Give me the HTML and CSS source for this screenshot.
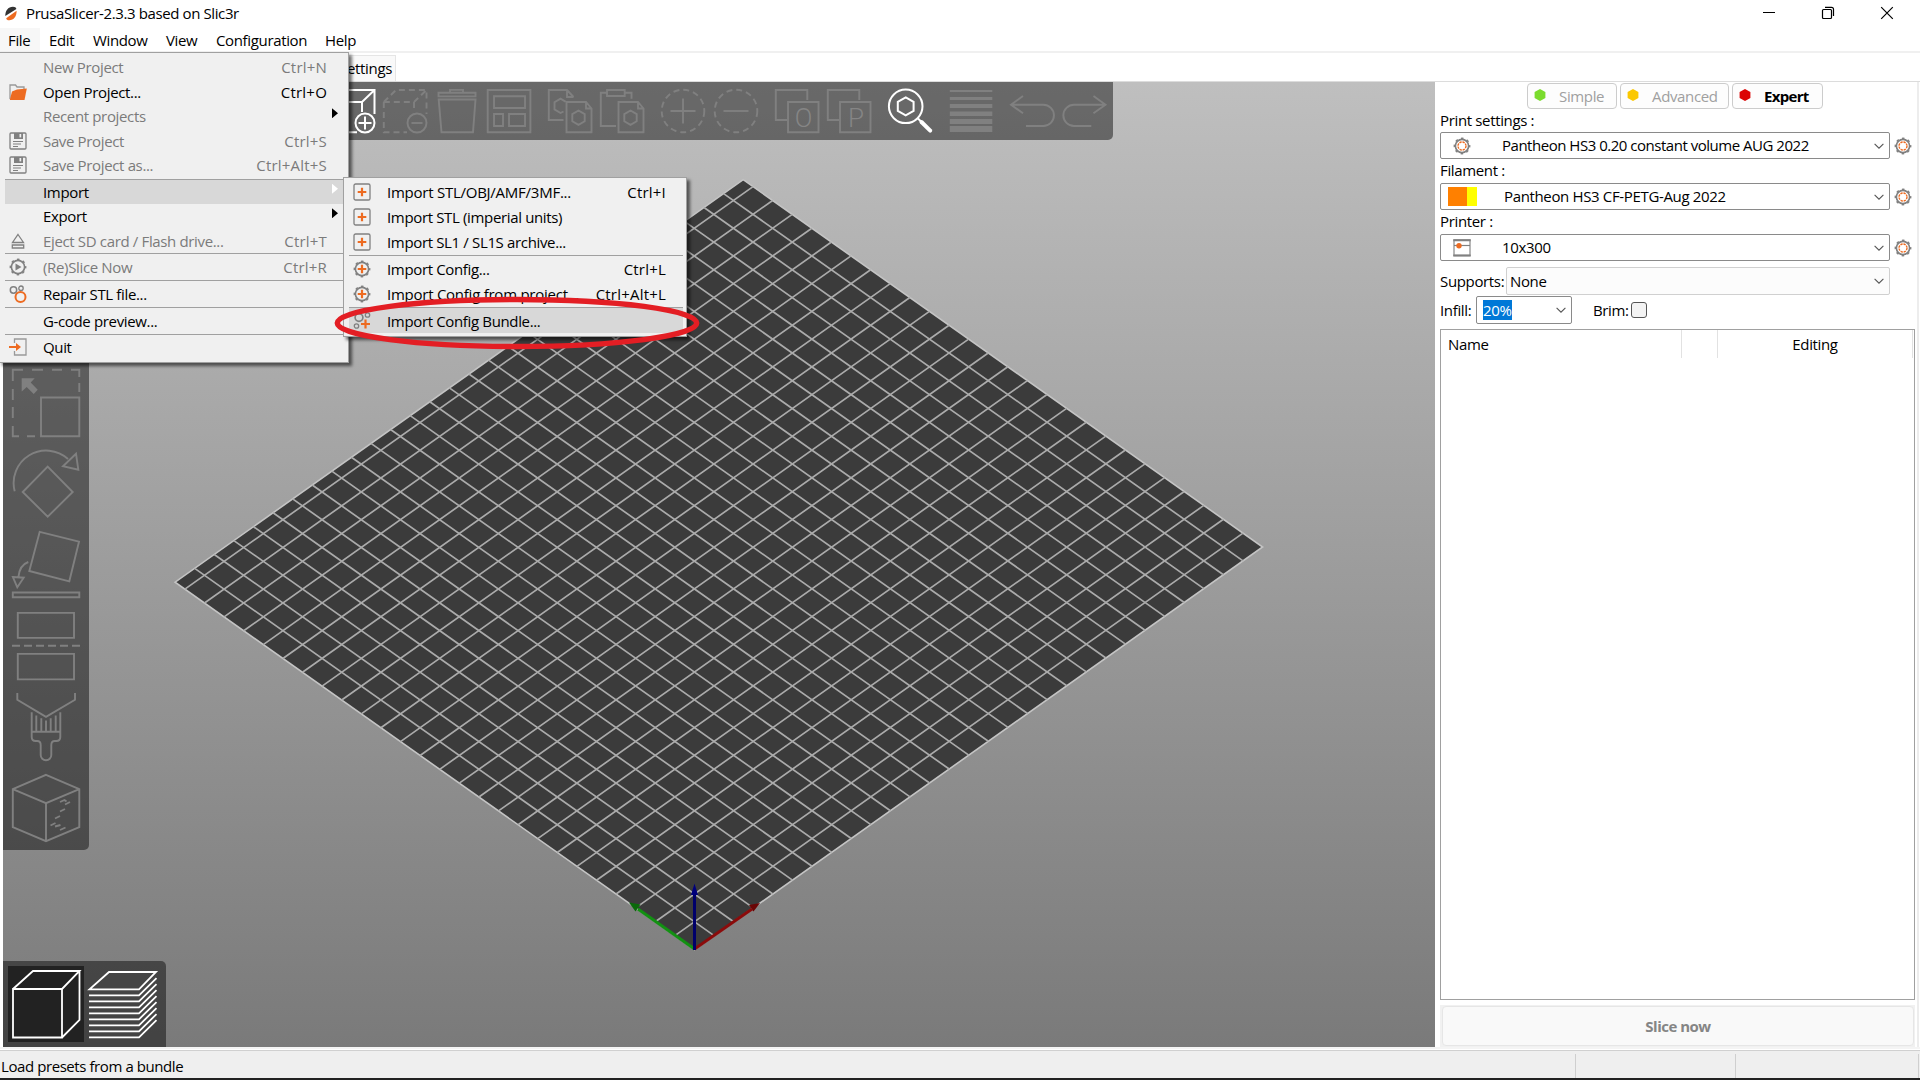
FILE: index.html
```html
<!DOCTYPE html>
<html lang="en">
<head>
<meta charset="utf-8">
<title>PrusaSlicer-2.3.3 based on Slic3r</title>
<link rel="stylesheet" href="styles.css">
</head>
<body>
<svg class="defs" aria-hidden="true">
  <symbol id="gear" viewBox="0 0 18 18">
    <circle cx="9" cy="9" r="6.6" fill="none" stroke="#808080" stroke-width="1.6"/>
    <circle cx="9" cy="9" r="7.6" fill="none" stroke="#808080" stroke-width="1.6" stroke-dasharray="2.6 3.37" stroke-dashoffset="1.3"/>
  </symbol>
  <symbol id="cog" viewBox="0 0 18 18">
    <use href="#gear"/>
    <circle cx="9" cy="9" r="4" fill="none" stroke="#ed6b21" stroke-width="1.4" stroke-dasharray="2.3 .84"/>
  </symbol>
  <symbol id="plus" viewBox="0 0 18 18"><path d="M9 4.700v8.600M4.700 9h8.600" stroke="#ed6b21" stroke-width="2.200"/></symbol>
  <symbol id="add-part" viewBox="0 0 18 18">
    <rect x="1" y="1" width="16" height="16" rx="1.6" fill="none" stroke="#808080" stroke-width="1.3"/><use href="#plus"/>
  </symbol>
  <symbol id="add-config" viewBox="0 0 18 18"><use href="#gear"/><use href="#plus"/></symbol>
  <symbol id="save" viewBox="0 0 18 18">
    <rect x="1" y="1" width="16" height="16" rx="1" fill="none" stroke="#808080" stroke-width="1.3"/>
    <path d="M5 1h9v6H5z" fill="#808080"/><path d="M10.500 2v3.400h1.700V2z" fill="#f0f0f0"/>
    <path d="M4 9.500h10M4 12h8M4 14.500h5" stroke="#808080" stroke-width="1.2"/>
  </symbol>
  <symbol id="chev" viewBox="0 0 10 6"><path d="M.6.8 5 5.200 9.400.8" fill="none" stroke="#555" stroke-width="1.1"/></symbol>
</svg>

<header class="titlebar">
  <svg class="logo" viewBox="0 0 12 14"><path d="M.3 9.500C.2 4 3 .5 8 .2c2 0 3 .8 3.400 2.200z" fill="#333"/><path d="M1.200 11.700 11.600 4.200c.2 5.500-2.800 9.300-7.400 9.600-1.800 0-2.700-.8-3-2.100z" fill="#ed6b21"/></svg>
  <span class="title">PrusaSlicer-2.3.3 based on Slic3r</span>
  <div class="winbtns">
    <svg viewBox="0 0 14 14"><path d="M1 6.500h12" stroke="#000"/></svg>
    <svg viewBox="0 0 14 14" fill="none" stroke="#000" stroke-width="1.200"><rect x="1.500" y="3.500" width="9" height="9" rx="1"/><path d="M4 1.300h6.500a2 2 0 0 1 2 2V10"/></svg>
    <svg viewBox="0 0 14 14"><path d="M1.200 1.200 12.800 12.800M12.800 1.200 1.200 12.800" stroke="#000" stroke-width="1.200"/></svg>
  </div>
</header>
<nav class="menubar">
  <span class="open m1">File</span><span class="m2">Edit</span><span class="m3">Window</span><span class="m4">View</span><span class="m5">Configuration</span><span class="m6">Help</span>
</nav>
<div class="tabs"><span class="tab">Settings</span></div>

<main class="work">
  <section class="canvas">
    <svg class="scene" viewBox="3 82 1432 965">
      <g transform="matrix(19.59 -13.88 -19.6 -13.86 694.500 949.500)">
        <path class="bed" d="M0 0H29V26.500H0z"/>
        <path class="grid" d="M1 0v26.500m1 0v-26.500m1 0v26.500m1 0v-26.500m1 0v26.500m1 0v-26.500m1 0v26.500m1 0v-26.500m1 0v26.500m1 0v-26.500m1 0v26.500m1 0v-26.500m1 0v26.500m1 0v-26.500m1 0v26.500m1 0v-26.500m1 0v26.500m1 0v-26.500m1 0v26.500m1 0v-26.500m1 0v26.500m1 0v-26.500m1 0v26.500m1 0v-26.500m1 0v26.500m1 0v-26.500m1 0v26.500m1 0v-26.500"/>
        <path class="grid" d="M0 1h29m0 1h-29m0 1h29m0 1h-29m0 1h29m0 1h-29m0 1h29m0 1h-29m0 1h29m0 1h-29m0 1h29m0 1h-29m0 1h29m0 1h-29m0 1h29m0 1h-29m0 1h29m0 1h-29m0 1h29m0 1h-29m0 1h29m0 1h-29m0 1h29m0 1h-29m0 1h29m0 1h-29"/>
      </g>
      <path d="M694.500 949 638 909" stroke="#129012" stroke-width="3"/><path d="M629 902.500 640.500 904.500 635.500 911.500z" fill="#0a6a0a"/>
      <path d="M694.500 949 752 909" stroke="#8a0b0b" stroke-width="3"/><path d="M760 903 753.500 911.500 749 905z" fill="#6a0505"/>
      <path d="M694.500 950V893" stroke="#00006a" stroke-width="3"/><path d="M694.500 883.500 698 895h-7z" fill="#00007c"/>
    </svg>

    <div class="toolbar top">
      <div class="grp">
        <svg class="on" viewBox="0 0 44 44"><path d="M.8 13v30.300H26M.8 13H31L43.500 1M.8 13 13 1h30.500v24M31 13v10"/><circle cx="34" cy="34" r="9.500"/><path d="M34 27.500v13M27.500 34h13"/></svg>
        <svg viewBox="0 0 44 44"><path class="dash" d="M.8 13v30.300H24M.8 13H31L43.500 1M.8 13 13 1h30.500v24M31 13v10"/><circle cx="34" cy="34" r="9.500"/><path d="M28.500 34h11"/></svg>
        <svg viewBox="0 0 44 44"><path d="M3.500 3.800h37v3.600h-37zM15 3.500V.9h13v2.600M3.700 10.500h36.800L38 43.300H6.500z"/></svg>
        <svg viewBox="0 0 44 44"><path d="M.7 1h42.700v42.300H.7zM7 7.300h31V19H7zM7 25h9v12H7zM22 25h16v12H22z"/></svg>
      </div>
      <div class="grp">
        <svg viewBox="0 0 44 44"><path d="M15.500 31H.8V1H19l6.500 7M19 1v7h6.500M18.500 13H38l5.500 6.500v23.800h-25zM38 13v6.500h5.500M30.500 21.500l6.200 3.600v7.200l-6.200 3.600-6.200-3.600v-7.200zM15.500 22.500l-3 1.500-6-3.600v-7.200l6-3.600 5 3"/></svg>
        <svg viewBox="0 0 44 44"><path d="M16 37H.8V3.700H7M24.500 3.700h7v6M7 1h17.700v6H7zM18.500 13H38l5.500 6.500v23.800h-25zM38 13v6.500h5.500M30.500 21.500l6.200 3.600v7.200l-6.200 3.600-6.200-3.600v-7.200z"/></svg>
      </div>
      <div class="grp">
        <svg viewBox="0 0 44 44"><circle class="dash" cx="22" cy="22" r="21.300"/><path d="M22 9.500v25M9.500 22h25"/></svg>
        <svg viewBox="0 0 44 44"><circle class="dash" cx="22" cy="22" r="21.300"/><path d="M9.500 22h25"/></svg>
      </div>
      <div class="grp">
        <svg viewBox="0 0 44 44"><path d="M12 31H.8V1h31.500v10M13 13h30.500v30.300H13z"/><text x="28.300" y="37.500">O</text></svg>
        <svg viewBox="0 0 44 44"><path d="M12 31H.8V1h31.500v10M13 13h30.500v30.300H13z"/><text x="28.800" y="37.500">P</text></svg>
      </div>
      <div class="grp"><svg class="on" viewBox="0 0 44 44"><circle cx="17.700" cy="17.300" r="16.800"/><path d="M17.700 8.300l7.900 4.500v9l-7.900 4.500-7.900-4.500v-9zM29.500 29l4 4"/><path d="M33.500 33l8.700 8.700" stroke-width="4" stroke-linecap="round"/></svg></div>
      <div class="grp"><svg class="fill" viewBox="0 0 44 44"><path d="M.8 1h42.500v2H.8zM.8 8h42.500v3H.8zM.8 15h42.500v4H.8zM.8 22.600h42.500V27H.8zM.8 30h42.500v5H.8zM.8 37h42.500v6H.8z"/></svg></div>
      <div class="grp">
        <svg viewBox="0 0 44 44"><path d="M13 7 1 15.700l12 8.600M1 15.700h32.300a10.650 10.650 0 0 1 0 21.300H16"/></svg>
        <svg viewBox="0 0 44 44"><path d="M31.500 7 43.500 15.700l-12 8.600M43.500 15.700H12a10.650 10.650 0 0 0 0 21.300h17.300"/></svg>
      </div>
    </div>

    <div class="toolbar side">
      <svg viewBox="0 0 68 68"><path d="M.8 12V.8H11M20 .8h11M40 .8h10M59 .8h8.300V8M.8 20v11M.8 38v11M.8 57v10.200H7M15 67.200h8M67.300 14v9M29 28.500h38.300v38.700H29z"/><path d="M9.700 9.300h13l-4 4.200 7 7.200-4 4.300-7-7-5 4.500z" class="solid"/></svg>
      <svg viewBox="0 0 68 68"><path d="M2.700 41.300A32.500 32.500 0 0 1 56 9M64 3.700l2.300 16L51 16.300zM35.700 16.700l25 25.300-25 24.700-25-24.700z"/></svg>
      <svg viewBox="0 0 68 68"><path d="M27.700.8 67 10.700 57.300 50.300 17.300 40zM16.300 31Q7.500 34 6.300 46.500M.9 46l10.800.7-6.400 9.600zM.8 61.500h66.500v4.700H.8z"/></svg>
      <svg viewBox="0 0 68 68"><path d="M5.800.9H62v25H5.800zM5.800 41.900H62v25.500H5.800z"/><path d="M0 33.800h68" stroke-dasharray="8 4" stroke-width="2"/></svg>
      <svg viewBox="0 0 68 68"><path d="M5.300 0v6.800l28.700 17 29-17V0M19.700 19.200V44q0 4 4 4h1.500q3.500 0 3.500 4v10a5.300 5.300 0 0 0 10.600 0V52q0-4 3.500-4h1.500q4 0 4-4V19.200M19.700 38.800h28.600M24.300 22.500v16M29.300 25.200v13.500M34 27.500v11M38.700 25.200v13.500M43.700 22.500v16"/></svg>
      <svg viewBox="0 0 68 68"><path d="M34 .8 67.300 15.200v38L34 67.200.8 53.200v-38zM.8 15.200l33.200 14 33.300-14M34 29.200v38"/><path d="M48 28l4.500-2 2 1.500M53 30.500l5-2.500M48 37.500l5-2.500M43 44.500l5-2.500M38.500 51.500l5-2.500M43 52.500l5.500-1.500M48 56l5.500-2.500"/></svg>
    </div>

    <div class="toolbar views">
      <svg class="active" viewBox="0 0 76 76"><path d="M5 23h49v48.500H5zM5 23 25 5h46.500L54 23M71.500 5v49L54 71.500"/></svg>
      <svg viewBox="0 0 76 76"><path d="M5.500 23.300H55L72 6H25zM5 29.300h50l17.500-17.200M5 35.300h50l17.500-17.200M5 41.300h50l17.500-17.200M5 47.300h50l17.500-17.200M5 53.300h50l17.500-17.200M5 59.300h50l17.500-17.200M5 65.300h50l17.500-17.200M5 71.300h50l17.500-17.200"/></svg>
    </div>
  </section>

  <aside class="panel">
    <div class="modes">
      <span class="mode simple"><svg viewBox="0 0 12 12"><path d="M6 0l5.400 3v6L6 12 .6 9V3z" fill="#7bdc2e"/></svg>Simple</span>
      <span class="mode adv"><svg viewBox="0 0 12 12"><path d="M6 0l5.400 3v6L6 12 .6 9V3z" fill="#fbc800"/></svg>Advanced</span>
      <span class="mode expert"><svg viewBox="0 0 12 12"><path d="M6 0l5.400 3v6L6 12 .6 9V3z" fill="#dc0404"/></svg>Expert</span>
    </div>
    <label>Print settings :</label>
    <div class="line"><div class="combo"><svg class="ci"><use href="#cog"/></svg><span class="s1">Pantheon HS3 0.20 constant volume AUG 2022</span><svg class="chev"><use href="#chev"/></svg></div><svg class="cog"><use href="#cog"/></svg></div>
    <label>Filament :</label>
    <div class="line"><div class="combo"><i class="swatch"></i><span class="s2">Pantheon HS3 CF-PETG-Aug 2022</span><svg class="chev"><use href="#chev"/></svg></div><svg class="cog"><use href="#cog"/></svg></div>
    <label>Printer :</label>
    <div class="line"><div class="combo"><svg class="ci" viewBox="0 0 18 18"><path d="M1 1h16v15.500H1z" fill="none" stroke="#999" stroke-width="1.400"/><path d="M.3 1.300h17.400M.3 16.500h17.400" stroke="#808080" stroke-width="2"/><path d="M1 6.500h16" stroke="#808080" stroke-width="1.200"/><circle cx="6" cy="6.800" r="2.700" fill="#ed6b21"/></svg><span>10x300</span><svg class="chev"><use href="#chev"/></svg></div><svg class="cog"><use href="#cog"/></svg></div>
    <div class="line supports"><span class="lb">Supports:</span><div class="combo light"><span>None</span><svg class="chev"><use href="#chev"/></svg></div></div>
    <div class="line infill"><span class="lb">Infill:</span><div class="combo"><span class="sel">20%</span><svg class="chev"><use href="#chev"/></svg></div><span class="brim">Brim:</span><i class="check"></i></div>
    <div class="list"><div class="head"><span class="name">Name</span><span></span><span class="edit">Editing</span></div></div>
    <div class="slice"><span>Slice now</span></div>
  </aside>
</main>

<footer class="status"><span class="msg">Load presets from a bundle</span><span class="f1"></span><span class="f2"></span></footer>

<div class="menu file">
  <div class="row off"><span>New Project</span><kbd>Ctrl+N</kbd></div>
  <div class="row"><svg viewBox="0 0 18 18"><path d="M1 16V2h5.500l1.500 2h7v3" fill="none" stroke="#999" stroke-width="1.300"/><path d="M3 8.500 8 6.500 17.800 5.500 15.500 17H.8z" fill="#ed6b21"/></svg><span>Open Project...</span><kbd>Ctrl+O</kbd></div>
  <div class="row off"><span>Recent projects</span><i class="arr"></i></div>
  <div class="row off"><svg><use href="#save"/></svg><span>Save Project</span><kbd>Ctrl+S</kbd></div>
  <div class="row off"><svg><use href="#save"/></svg><span>Save Project as...</span><kbd>Ctrl+Alt+S</kbd></div>
  <hr class="first">
  <div class="row hot"><span>Import</span><i class="arr white"></i></div>
  <div class="row"><span>Export</span><i class="arr"></i></div>
  <div class="row off"><svg viewBox="0 0 18 18"><path d="M9 2.500 14.500 10.500h-11zM3.300 13h11.400v3H3.300z" fill="none" stroke="#808080" stroke-width="1.300"/></svg><span>Eject SD card / Flash drive...</span><kbd>Ctrl+T</kbd></div>
  <hr>
  <div class="row off tall"><svg viewBox="0 0 18 18"><use href="#gear"/><path d="M6.500 5.500v7l6-3.500z" fill="#808080"/></svg><span>(Re)Slice Now</span><kbd>Ctrl+R</kbd></div>
  <hr>
  <div class="row tall"><svg viewBox="0 0 18 18" fill="none"><circle cx="4.500" cy="5" r="3.200" stroke="#808080" stroke-width="1.500"/><circle cx="12" cy="3.200" r="2.200" stroke="#808080" stroke-width="1.300"/><circle cx="11.500" cy="12" r="5" stroke="#ed6b21" stroke-width="2"/></svg><span>Repair STL file...</span></div>
  <hr>
  <div class="row short"><span>G-code preview...</span></div>
  <hr>
  <div class="row short"><svg viewBox="0 0 18 18"><path d="M5.500 5V1H17v16H5.500v-4" fill="none" stroke="#999" stroke-width="1.300"/><path d="M0 9h8" stroke="#ed6b21" stroke-width="2"/><path d="M7 5l5 4-5 4z" fill="#ed6b21"/></svg><span>Quit</span></div>
</div>

<div class="menu sub">
  <div class="row"><svg><use href="#add-part"/></svg><span class="long">Import STL/OBJ/AMF/3MF...</span><kbd>Ctrl+I</kbd></div>
  <div class="row"><svg><use href="#add-part"/></svg><span>Import STL (imperial units)</span></div>
  <div class="row"><svg><use href="#add-part"/></svg><span>Import SL1 / SL1S archive...</span></div>
  <hr class="first">
  <div class="row"><svg><use href="#add-config"/></svg><span>Import Config...</span><kbd>Ctrl+L</kbd></div>
  <div class="row"><svg><use href="#add-config"/></svg><span class="long">Import Config from project...</span><kbd>Ctrl+Alt+L</kbd></div>
  <hr class="second">
  <div class="row hot"><svg viewBox="0 0 18 18" fill="none" stroke="#808080"><circle cx="6" cy="5.500" r="3.900" stroke-width="1.700"/><circle cx="14.500" cy="3" r="2.200" stroke-width="1.300"/><circle cx="3.500" cy="14" r="2.200" stroke-width="1.300"/><path d="M12.500 7.500v9M8 12h9" stroke="#ed6b21" stroke-width="2.200"/></svg><span>Import Config Bundle...</span></div>
</div>
<svg class="marker" viewBox="0 0 366 54"><ellipse cx="183" cy="27" rx="179.700" ry="23.500"/></svg>
</body>
</html>
```
FILE: styles.css
```css
* { box-sizing: border-box; }
body {
  margin: 0; width: 1920px; height: 1080px; overflow: hidden; position: relative;
  display: flex; flex-direction: column; background: #fff; color: #000;
  font: 15px/20px "Open Sans", "Noto Sans", sans-serif; letter-spacing: -0.35px;
}
svg { display: block; flex: none; }
.defs { position: absolute; width: 0; height: 0; }
span, label, kbd { white-space: nowrap; }

.titlebar { height: 28px; flex: none; display: flex; align-items: center; padding: 0 16px 2px 5px; }
.logo { width: 12px; height: 15px; margin-right: 9px; }
.title { letter-spacing: -.39px; }
.winbtns { margin-left: auto; display: flex; gap: 45px; margin-right: 10px; }
.winbtns svg { width: 14px; height: 14px; }

.menubar { height: 25px; flex: none; display: flex; border-bottom: 2px solid #f0f0f0; line-height: 25px; }
.menubar span { flex: none; padding-left: 8px; }
.m1 { width: 40px; } .m2 { width: 44px; } .m3 { width: 73px; } .m4 { width: 51px; } .m5 { width: 109px; }
.menubar .m2, .menubar .m3, .menubar .m4 { padding-left: 9px; }
.open { background: #f7f7f7; }

.tabs { height: 29px; flex: none; border-bottom: 1px solid #dcdcdc; padding-top: 2px; display: flex; }
.tab { width: 396px; text-align: right; padding-right: 3px; background: #f9f9f9; border: 1px solid #e5e5e5; border-bottom: 0; line-height: 24px; }

.work { height: 967px; flex: none; display: flex; padding-left: 3px; border-bottom: 2px solid #f4f4f4; }
.canvas { width: 1432px; height: 965px; position: relative; background: linear-gradient(#bfbfbf, #7a7a7a); }
.scene { width: 1432px; height: 965px; }
.bed { fill: #3b3b3b; stroke: #c4c4c4; stroke-width: 1.6; vector-effect: non-scaling-stroke; }
.grid { fill: none; stroke: #ababab; stroke-width: 1.7; vector-effect: non-scaling-stroke; }

.toolbar { position: absolute; background: rgba(0, 0, 0, .45); display: flex; }
.toolbar svg { fill: none; stroke: #808080; stroke-width: 1.9; overflow: visible; }
.toolbar .on { stroke: #fff; stroke-width: 2; }
.toolbar .fill { fill: #808080; stroke: none; }
.solid { fill: #808080; stroke: none; }
.dash { stroke-dasharray: 6 4; }
.top { left: 0; top: 0; width: 1110px; height: 58px; border-radius: 0 0 5px 0; justify-content: flex-end; align-items: center; gap: 17px; padding-right: 7px; }
.grp { display: flex; gap: 8.2px; }
.top svg { width: 44px; height: 44px; }
.top text { font: 300 26px Roboto, sans-serif; fill: #858585; stroke: none; text-anchor: middle; }
.side { left: 0; top: 260px; width: 86px; height: 508px; border-radius: 0 0 5px 0; flex-direction: column; align-items: center; justify-content: flex-end; gap: 12.9px; padding-bottom: 8.5px; }
.side svg { width: 68px; height: 68px; }
.views { left: 0; bottom: 0; width: 163px; height: 86px; border-radius: 0 5px 0 0; padding: 5px; gap: 0; }
.views svg { width: 76px; height: 76px; stroke: #fff; stroke-width: 1.8; }
.views .active { background: #222; }

.panel { flex: 1; padding: 1px 2px 0 5px; margin-right: 3px; border-right: 2px solid #ededed; display: flex; flex-direction: column; }
.modes { display: flex; gap: 3px; padding-left: 87px; }
.mode { height: 26px; border: 1px solid #ccc; border-radius: 4px; background: #fdfdfd; color: #a0a0a0; display: flex; align-items: center; padding-left: 6px; }
.mode svg { width: 12px; height: 12px; margin-right: 13px; margin-top: -2px; }
.simple { width: 90px; } .adv { width: 109px; } .expert { width: 91px; color: #000; font-weight: 700; letter-spacing: -.7px; }
.panel label { height: 24px; line-height: 23px; flex: none; }
.modes + label { height: 23px; line-height: 22px; }
.line { display: flex; align-items: center; flex: none; height: 27px; }
.combo { width: 450px; height: 27px; border: 1px solid #8a8a8a; border-radius: 2px; background: #fff; display: flex; align-items: center; padding-right: 5px; }
.combo span { margin-top: -1px; }
.s1 { letter-spacing: -.48px; }
.ci { width: 18px; height: 18px; margin: 0 31px 0 12px; }
.swatch { width: 29px; height: 19px; margin: 0 27px 0 7px; background: linear-gradient(90deg, #ff8000 19px, #ff0 19px); }
.chev { width: 10px; height: 6px; margin-left: auto; }
.cog { width: 18px; height: 18px; margin-left: 4px; }
.supports { margin-top: 6px; height: 28px; }
.lb { width: 66px; }
.supports .combo { width: 384px; height: 28px; padding-left: 3px; border-color: #d0d0d0; background: #fcfcfc; }
.infill { margin-top: 1px; height: 28px; }
.infill .lb { width: 36px; }
.infill .combo { width: 96px; height: 28px; padding-left: 6px; }
.sel { background: #0078d7; color: #fff; width: 29px; }
.brim { width: 38px; margin-left: 21px; }
.check { width: 16px; height: 16px; border: 1px solid #555; border-radius: 3px; background: #f3f3f3; }
.list { height: 671px; width: 475px; margin-top: 5px; border: 1px solid #a0a0a0; flex: none; }
.head { height: 28px; display: flex; line-height: 29px; border-right: 1px solid #e2e2e2; margin-right: 1px; }
.name { width: 241px; padding-left: 7px; border-right: 1px solid #e2e2e2; }
.head span:nth-child(2) { width: 36px; border-right: 1px solid #e2e2e2; }
.edit { flex: 1; text-align: center; }
.slice { width: 475px; height: 42px; margin-top: 5px; background: #f1f1f1; padding: 1px 1px 1px 2px; flex: none; }
.slice span { display: block; height: 40px; line-height: 39px; border: 1px solid #e6e6e6; border-radius: 4px; background: #f9f9f9; text-align: center; color: #858585; font-weight: 700; letter-spacing: -.5px; }

.status { flex: 1; display: flex; background: #efefef; border-top: 1px solid #d0d0d0; border-bottom: 3px solid #222; padding: 3px 1px 0 1px; margin-top: 1px; }
.status span { border-right: 1px solid #cfcfcf; line-height: 24px; }
.msg { width: 1575px; letter-spacing: -.42px; } .f1 { width: 160px; } .f2 { flex: 1; }

.menu { position: absolute; background: #f0f0f0; border: 1px solid #a0a0a0; box-shadow: 3px 3px 3px rgba(0, 0, 0, .55); }
.file { left: -1px; top: 52px; width: 350px; height: 311px; padding: 2px 5px; }
.sub { left: 343px; top: 177px; width: 344px; height: 160px; padding: 1px 3px 3px 5px; }
.row { height: 24.5px; display: grid; grid-template-columns: 38px 1fr auto; align-items: center; padding-right: 16px; }
.row svg { width: 18px; height: 18px; margin-left: 4px; grid-column: 1; grid-row: 1; }
.row span { grid-column: 2; grid-row: 1; }
.row kbd { grid-column: 3; font: inherit; letter-spacing: .2px; }
.sub .row { height: 25px; padding-right: 17px; }
.tall { height: 26px; } .short { height: 25.5px; }
.long { letter-spacing: -.25px; }
.off { color: #7b7b7b; }
.hot { background: #d8d8d8; }
.menu hr { margin: 0; border: 0; height: 1px; background: #a0a0a0; }
.menu .first { margin-top: 1px; }
.menu .second { margin-top: 1px; }
.arr { grid-column: 3; grid-row: 1; width: 6px; height: 10px; background: #000; clip-path: polygon(0 0, 100% 50%, 0 100%); margin-right: -12px; margin-top: -6px; }
.file .arr { position: relative; left: 5px; }
.white { background: #fff; }
.marker { position: absolute; left: 334px; top: 296.300px; width: 366px; height: 54px; fill: none; stroke: #e31e24; stroke-width: 5.500; }
```
